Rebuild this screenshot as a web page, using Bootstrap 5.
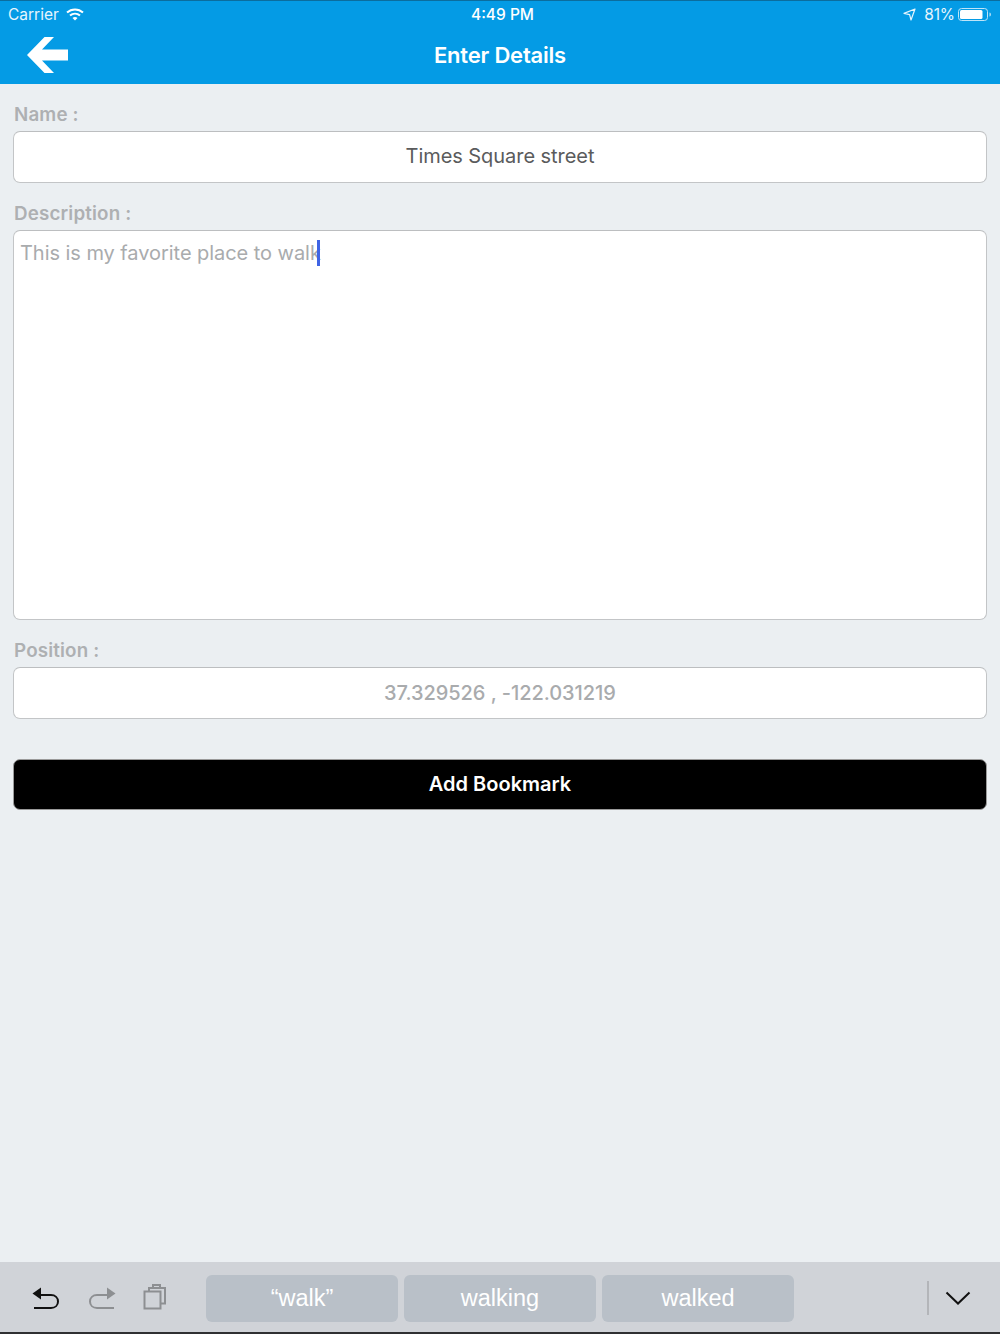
<!DOCTYPE html>
<html lang="en">
  <head>
    <meta charset="UTF-8" />
    <meta name="viewport" content="width=device-width, initial-scale=1.0" />
    <title>Enter Details</title>
    <link href="https://cdn.jsdelivr.net/npm/bootstrap@5.3.2/dist/css/bootstrap.min.css" rel="stylesheet" />
    <style>
      html, body { height: 100%; }
      body {
        background: #ebeff2;
        font-family: Inter, "Liberation Sans", sans-serif;
        overflow: hidden;
      }
      .app-shell { height: 1334px; }
      .app-header {
        height: 84px;
        background: #049be5;
        border-top: 1px solid #0b6d9e;
        color: #fff;
      }
      .status-row { height: 27px; padding: 0 8px; font-size: 15.5px; color: #e6f5fd; }
      .status-side { width: 200px; }
      .carrier-wifi { margin-left: 7px; }
      .status-pct { margin-right: 3px; letter-spacing: -0.1px; }
      .status-time { font-size: 15.5px; font-weight: 500; color: #fff; padding-left: 5px; }
      .title-row { height: 56px; position: relative; }
      .back-arrow { left: 26px; margin-top: -1px; }
      .title-text { font-size: 22px; font-weight: 600; letter-spacing: -0.2px; margin-top: -1px; }
      .form-area { padding: 20px 13px 0; }
      .field-label {
        font-size: 18.8px;
        font-weight: 600;
        color: #aeb0b2;
        line-height: 21px;
        height: 22px;
        margin-bottom: 5px;
        padding-left: 1px;
        letter-spacing: 0.15px;
      }
      .field-box.form-control {
        height: 52px;
        margin-bottom: 20px;
        border: 1px solid #c3c5c7;
        border-top-color: #bcbec0;
        border-radius: 7px;
        background: #fff;
        font-size: 20px;
        line-height: 48px;
        padding: 0 6px;
        color: #5a5b5c;
        text-align: center;
        letter-spacing: -0.05px;
      }
      .field-box.desc-box {
        height: 390px;
        text-align: left;
        color: #a9abad;
        line-height: 44px;
      }
      .field-box.pos-box { color: #a9abad; font-weight: 500; margin-bottom: 40px; line-height: 50px; }
      .text-caret { display: inline-block; width: 3px; height: 26px; background: #3f64e4; vertical-align: -6px; margin-left: -4px; }
      .save-btn.btn {
        height: 51px;
        background: #000;
        border: 1px solid #9a9a9a;
        border-radius: 7px;
        color: #fff;
        font-size: 20px;
        font-weight: 600;
        padding: 0 0 2px;
      }
      .kb-bar {
        height: 72px;
        background: #d0d3d8;
        border-bottom: 2px solid #2f3032;
      }
      .kb-tools { width: 206px; padding-left: 31px; gap: 26px; }
      .kb-word {
        width: 192px;
        height: 47px;
        background: #b9c0c8;
        border-radius: 6px;
        color: #fff;
        font-size: 23.5px;
        padding-top: 1px;
        font-family: "Liberation Sans", sans-serif;
      }
      .kb-words { gap: 6px; margin-top: 2px; }
      .kb-divider { width: 2px; height: 34px; background: #b3b5b9; margin-left: 133px; margin-top: 2px; }
      .kb-hide { margin-left: 16px; margin-top: 2px; }
    </style>
  </head>
  <body>
    <div class="app-shell d-flex flex-column">
      <header class="app-header">
        <div class="status-row d-flex align-items-center justify-content-between">
          <div class="status-side d-flex align-items-center">
            <span>Carrier</span>
            <svg class="carrier-wifi" width="18" height="13" viewBox="0 0 18 13" fill="none" stroke="#fff" stroke-width="2">
              <path d="M1 4.600C5.600.3 12.400.3 17 4.600" />
              <path d="M4 7.600c2.900-2.600 7.100-2.600 10 0" />
              <path d="M9 12.600 6.500 10c1.400-1.200 3.600-1.200 5 0z" fill="#fff" stroke="none" />
            </svg>
          </div>
          <div class="status-time">4:49 PM</div>
          <div class="status-side d-flex align-items-center justify-content-end">
            <svg class="me-2" width="13" height="13" viewBox="0 0 13 13" fill="none" stroke="#e6f5fd" stroke-width="1.2">
              <path d="M12 1 1 5.400l5.600 1.200L8 12z" stroke-linejoin="round" />
            </svg>
            <span class="status-pct">81%</span>
            <svg width="34" height="15" viewBox="0 0 34 15">
              <rect x="0.500" y="1.500" width="29" height="12" rx="3" fill="none" stroke="#bfe4f8" />
              <rect x="2" y="3" width="22.500" height="9" rx="1.500" fill="#fff" />
              <path d="M31.500 5.500c1 .3 1.400 1 1.400 2s-.4 1.700-1.400 2z" fill="#bfe4f8" />
            </svg>
          </div>
        </div>
        <div class="title-row d-flex align-items-center justify-content-center">
          <svg class="back-arrow position-absolute top-50 translate-middle-y" width="43" height="36" viewBox="0 0 43 36">
            <path d="M1 18 18.500 0H28L16 12.400H42V23.600H16L28 36H18.500z" fill="#fff" />
          </svg>
          <span class="title-text">Enter Details</span>
        </div>
      </header>

      <main class="form-area flex-grow-1">
        <div class="field-label">Name :</div>
        <div class="field-box form-control">Times Square street</div>
        <div class="field-label">Description :</div>
        <div class="field-box desc-box form-control">This is my favorite place to walk<span class="text-caret"></span></div>
        <div class="field-label">Position :</div>
        <div class="field-box pos-box form-control">37.329526 , -122.031219</div>
        <button class="save-btn btn w-100" type="button">Add Bookmark</button>
      </main>

      <footer class="kb-bar d-flex align-items-center">
        <div class="kb-tools d-flex align-items-center">
          <svg width="30" height="26" viewBox="0 0 30 26" fill="none" stroke="#111" stroke-width="2">
            <path d="M3 24h17c4.200 0 7-2.800 7-6.500S24.200 11 20 11H8" />
            <path d="M1.500 9.500 10 3.500v12z" fill="#111" stroke="none" />
          </svg>
          <svg width="30" height="26" viewBox="0 0 30 26" fill="none" stroke="#8d8f92" stroke-width="2">
            <path d="M27 24H10c-4.200 0-7-2.800-7-6.500S5.800 11 10 11h12" />
            <path d="M28.500 9.500 20 3.500v12z" fill="#8d8f92" stroke="none" />
          </svg>
          <svg width="26" height="26" viewBox="0 0 26 26" fill="none" stroke="#8d8f92" stroke-width="2">
            <rect x="1.500" y="7.500" width="16" height="17" />
            <path d="M6 7V4h16v15.500h-4" />
            <path d="M10 3.500V1h7v2.500" />
          </svg>
        </div>
        <div class="kb-words d-flex">
          <div class="kb-word d-flex align-items-center justify-content-center">“walk”</div>
          <div class="kb-word d-flex align-items-center justify-content-center">walking</div>
          <div class="kb-word d-flex align-items-center justify-content-center">walked</div>
        </div>
        <div class="kb-divider"></div>
        <svg class="kb-hide" width="26" height="14" viewBox="0 0 26 14" fill="none" stroke="#111" stroke-width="2">
          <path d="M1.500 1.500 13 12.500 24.500 1.500" />
        </svg>
      </footer>
    </div>
    <script src="https://cdn.jsdelivr.net/npm/bootstrap@5.3.2/dist/js/bootstrap.bundle.min.js"></script>
  </body>
</html>
